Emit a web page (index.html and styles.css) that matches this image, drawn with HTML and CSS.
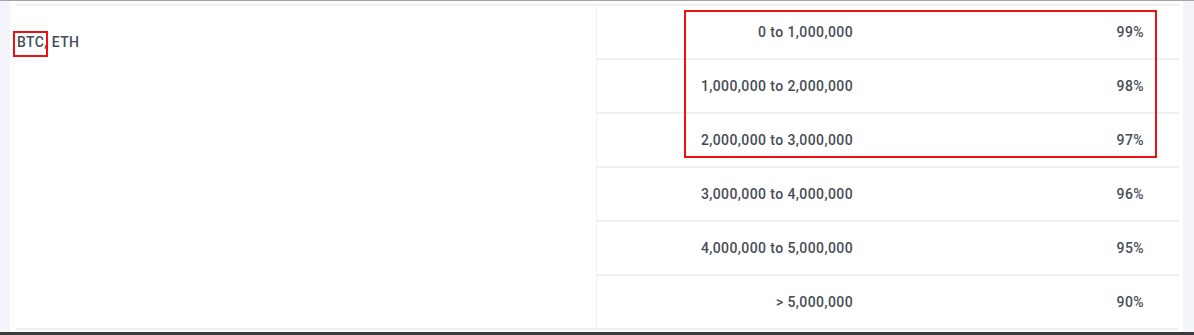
FILE: index.html
```html
<!DOCTYPE html>
<html>
<head>
<meta charset="utf-8">
<link rel="stylesheet" href="styles.css">
</head>
<body>
<div class="page">
  <div class="panel">
    <div class="grid">
      <div class="coins">BTC, ETH</div>
      <div class="cell range">0 to 1,000,000</div><div class="cell pct">99%</div>
      <div class="cell range">1,000,000 to 2,000,000</div><div class="cell pct">98%</div>
      <div class="cell range">2,000,000 to 3,000,000</div><div class="cell pct">97%</div>
      <div class="cell range">3,000,000 to 4,000,000</div><div class="cell pct">96%</div>
      <div class="cell range">4,000,000 to 5,000,000</div><div class="cell pct">95%</div>
      <div class="cell range">&gt; 5,000,000</div><div class="cell pct">90%</div>
    </div>
  </div>
  <div class="mark mark-coin"></div>
  <div class="mark mark-rows"></div>
</div>
</body>
</html>
```
FILE: styles.css
```css
html, body {
  margin: 0;
  padding: 0;
}
body {
  font-family: Roboto, "Liberation Sans", sans-serif;
  font-size: 14px;
  font-weight: 500;
  letter-spacing: 0.4px;
  color: #474d57;
  background: #f4f5fa;
}
.page {
  position: relative;
  box-sizing: border-box;
  width: 1194px;
  height: 335px;
  background: #f4f5fa;
  border-top: 1px solid #a4a4a6;
  border-bottom: 3px solid #3c3c3e;
  padding: 0 11px 0 10px;
}
.panel {
  background: #ffffff;
  padding: 3px 4px 2px 6px;
  height: 100%;
  box-sizing: border-box;
}
.grid {
  display: grid;
  grid-template-columns: 581px 291px 291px;
  grid-auto-rows: 54px;
  border-top: 2px solid #eef0f4;
}
.coins {
  grid-row: 1 / span 6;
  grid-column: 1;
  box-sizing: border-box;
  border-right: 1px solid #eef0f4;
  border-bottom: 2px solid #eef0f4;
  padding: 26px 0 0 1px;
  line-height: 20px;
}
.cell {
  box-sizing: border-box;
  border-bottom: 2px solid #eef0f4;
  display: flex;
  align-items: center;
  justify-content: flex-end;
  padding-right: 35px;
  padding-bottom: 1px;
}
.mark {
  position: absolute;
  border: 2px solid #ee1111;
  box-sizing: border-box;
}
.mark-coin {
  left: 13px;
  top: 30px;
  width: 35px;
  height: 26px;
}
.mark-rows {
  left: 684px;
  top: 9px;
  width: 473px;
  height: 148px;
}
```
